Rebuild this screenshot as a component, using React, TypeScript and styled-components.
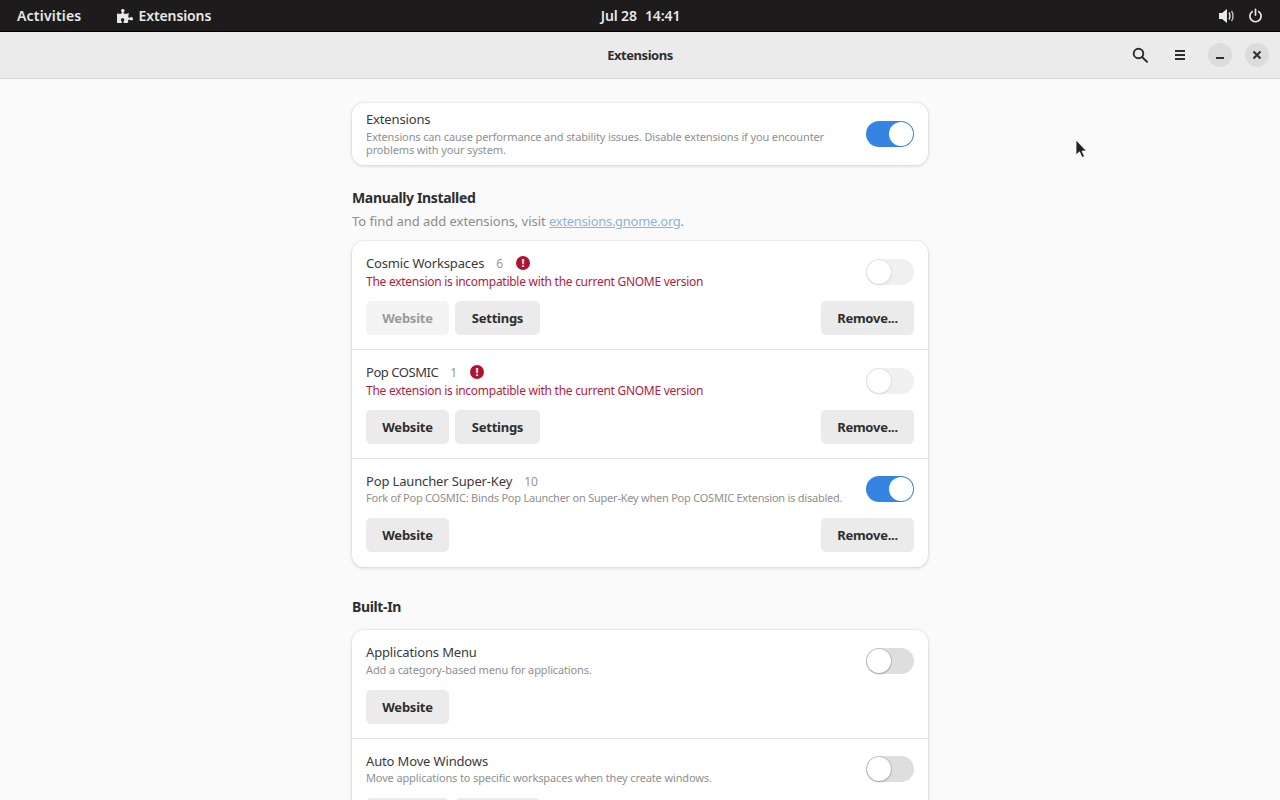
import React from 'react';
import styled, { createGlobalStyle } from 'styled-components';
import { FaPuzzlePiece } from 'react-icons/fa';

const GlobalStyle = createGlobalStyle`
  html, body {
    margin: 0;
    padding: 0;
    height: 100%;
    overflow: hidden;
    background: #fafafa;
  }
  body {
    font-family: "Noto Sans", "Open Sans", sans-serif;
    color: #2e2e2e;
  }
`;

type Ext = {
  name: string;
  version?: string;
  error?: boolean;
  desc?: string;
  on?: boolean;
  websiteDisabled?: boolean;
  settings?: boolean;
  remove?: boolean;
  nameSpacing?: number;
  descSpacing?: number;
};

const manual: Ext[] = [
  { name: 'Cosmic Workspaces', version: '6', error: true, websiteDisabled: true, settings: true, remove: true },
  { name: 'Pop COSMIC', version: '1', error: true, settings: true, remove: true, nameSpacing: -0.45 },
  {
    name: 'Pop Launcher Super-Key',
    version: '10',
    on: true,
    remove: true,
    desc: 'Fork of Pop COSMIC: Binds Pop Launcher on Super-Key when Pop COSMIC Extension is disabled.',
    descSpacing: -0.23,
  },
];

const builtIn: Ext[] = [
  { name: 'Applications Menu', desc: 'Add a category-based menu for applications.' },
  { name: 'Auto Move Windows', desc: 'Move applications to specific workspaces when they create windows.', settings: true },
];

const ExtensionRow = ({ ext }: { ext: Ext }) => (
  <Row>
    <RowTop>
      <RowText>
        <NameLine>
          <Name $spacing={ext.nameSpacing}>{ext.name}</Name>
          {ext.version && <Version>{ext.version}</Version>}
          {ext.error && <ErrorBadge>!</ErrorBadge>}
        </NameLine>
        {ext.error ? (
          <ErrorText>The extension is incompatible with the current GNOME version</ErrorText>
        ) : (
          <Desc $spacing={ext.descSpacing}>{ext.desc}</Desc>
        )}
      </RowText>
      <Toggle $on={!!ext.on} $faded={!!ext.error} />
    </RowTop>
    <Actions>
      <Button $width={83} $disabled={ext.websiteDisabled}>Website</Button>
      {ext.settings && <Button $width={85}>Settings</Button>}
      {ext.remove && <RemoveButton $width={93}>Remove...</RemoveButton>}
    </Actions>
  </Row>
);

export default function App() {
  return (
    <>
      <GlobalStyle />
      <Screen>
        <TopBar>
          <TopLeft>
            <ActivitiesLabel>Activities</ActivitiesLabel>
            <TopApp>
              <FaPuzzlePiece size={16} />
              <AppLabel>Extensions</AppLabel>
            </TopApp>
          </TopLeft>
          <Clock>
            <span>Jul 28</span>
            <span>14:41</span>
          </Clock>
          <TopRight>
            <svg width="17" height="16" viewBox="0 0 17 16" fill="#e8e8e8">
              <path d="M1 5h3l5-4v14l-5-4H1z" />
              <path d="M11 4.500c1.200 1.500 1.200 5.500 0 7" fill="none" stroke="#e8e8e8" strokeWidth="1.500" />
              <path d="M13.500 3c2 2.500 2 7.500 0 10" fill="none" stroke="#bdbdbd" strokeWidth="1.500" />
            </svg>
            <svg width="15" height="15" viewBox="0 0 16 16" fill="none" stroke="#e8e8e8" strokeWidth="1.800" strokeLinecap="round">
              <path d="M8 1.500v6" />
              <path d="M4.500 3.800a6 6 0 1 0 7 0" />
            </svg>
          </TopRight>
        </TopBar>

        <Header>
          <HeaderTitle>Extensions</HeaderTitle>
          <HeaderTools>
            <IconSlot>
              <svg width="16" height="16" viewBox="0 0 16 16" fill="none" stroke="#2e2e2e" strokeWidth="1.900">
                <circle cx="6.500" cy="6.500" r="4.800" />
                <path d="M10 10l5 4.800" strokeLinecap="round" />
              </svg>
            </IconSlot>
            <IconSlot>
              <svg width="12" height="12" viewBox="0 0 12 12" fill="#2e2e2e">
                <rect x="1" y="1" width="10" height="2" />
                <rect x="1" y="5" width="10" height="2" />
                <rect x="1" y="9" width="10" height="2" />
              </svg>
            </IconSlot>
            <WindowButton>
              <svg width="10" height="10" viewBox="0 0 10 10" fill="#2e2e2e">
                <rect x="1" y="7" width="8" height="2" />
              </svg>
            </WindowButton>
            <CloseButton>
              <svg width="10" height="10" viewBox="0 0 10 10" fill="none" stroke="#2e2e2e" strokeWidth="2">
                <path d="M1.500 1.500l7 7M8.500 1.500l-7 7" />
              </svg>
            </CloseButton>
          </HeaderTools>
        </Header>

        <Content>
          <Column>
            <MainCard>
              <MainText>
                <Name>Extensions</Name>
                <Desc>
                  Extensions can cause performance and stability issues. Disable extensions if you encounter
                  problems with your system.
                </Desc>
              </MainText>
              <Toggle $on />
            </MainCard>

            <SectionTitle>Manually Installed</SectionTitle>
            <SectionHint>
              To find and add extensions, visit <HintLink>extensions.gnome.org</HintLink>.
            </SectionHint>
            <Card>
              {manual.map((ext) => (
                <ExtensionRow key={ext.name} ext={ext} />
              ))}
            </Card>

            <BuiltInTitle>Built-In</BuiltInTitle>
            <Card>
              {builtIn.map((ext) => (
                <ExtensionRow key={ext.name} ext={ext} />
              ))}
            </Card>
          </Column>
        </Content>

        <Cursor>
          <svg width="12" height="20" viewBox="0 0 12 20">
            <path d="M1 1v15l3.500-3.200L7 18.500l2.500-1-2.400-5.500H11.500z" fill="#222" stroke="#fff" strokeWidth="0.800" />
          </svg>
        </Cursor>
      </Screen>
    </>
  );
}

const Screen = styled.div`
  position: relative;
  width: 1280px;
  height: 800px;
  overflow: hidden;
  background: #fafafa;
  display: flex;
  flex-direction: column;
`;

const TopBar = styled.div`
  flex: 0 0 31px;
  background: #1d1b1b;
  border-bottom: 1px solid #000;
  display: grid;
  grid-template-columns: 1fr auto 1fr;
  align-items: center;
  padding: 0 17px;
  color: #e8e8e8;
`;

const TopLeft = styled.div`
  display: flex;
  align-items: center;
  gap: 36px;
`;

const TopLabel = styled.span`
  font-size: 14px;
  font-weight: 600;
`;

const ActivitiesLabel = styled(TopLabel)`
  letter-spacing: 0.2px;
`;

const AppLabel = styled(TopLabel)`
  letter-spacing: -0.1px;
`;

const TopApp = styled.div`
  display: flex;
  align-items: center;
  gap: 5px;
`;

const Clock = styled.div`
  display: flex;
  gap: 8px;
  font-size: 14px;
  font-weight: 600;
  letter-spacing: -0.1px;
  padding-left: 1px;
`;

const TopRight = styled.div`
  display: flex;
  align-items: center;
  justify-content: flex-end;
  gap: 13px;
`;

const Header = styled.div`
  flex: 0 0 46px;
  background: #ebebeb;
  border-bottom: 1px solid #d6d6d6;
  display: flex;
  align-items: center;
  justify-content: center;
  position: relative;
`;

const HeaderTitle = styled.div`
  font-size: 13px;
  font-weight: 700;
  letter-spacing: -0.45px;
`;

const HeaderTools = styled.div`
  position: absolute;
  right: 11px;
  top: 11px;
  display: flex;
  align-items: center;
  gap: 16px;
`;

const IconSlot = styled.div`
  width: 24px;
  height: 24px;
  display: flex;
  align-items: center;
  justify-content: center;
`;

const WindowButton = styled(IconSlot)`
  border-radius: 50%;
  background: #dcdcdc;
`;

const CloseButton = styled(WindowButton)`
  margin-left: -3px;
`;

const Content = styled.div`
  flex: 1;
  overflow: hidden;
`;

const Column = styled.div`
  width: 576px;
  margin: 0 auto;
  padding-top: 24px;
`;

const Card = styled.div`
  background: #fff;
  border-radius: 12px;
  box-shadow: 0 0 0 1px rgba(0, 0, 0, 0.03), 0 1px 3px 1px rgba(0, 0, 0, 0.09);
  overflow: hidden;
`;

const MainCard = styled(Card)`
  height: 62px;
  box-sizing: border-box;
  padding: 0 14px;
  display: flex;
  align-items: center;
  justify-content: space-between;
`;

const SectionTitle = styled.div`
  margin-top: 23px;
  font-size: 14px;
  font-weight: 700;
  line-height: 20px;
  letter-spacing: -0.35px;
`;

const BuiltInTitle = styled(SectionTitle)`
  margin-top: 30px;
  margin-bottom: 13px;
`;

const SectionHint = styled.div`
  margin-top: 3px;
  margin-bottom: 10px;
  font-size: 13px;
  line-height: 20px;
  letter-spacing: -0.04px;
  color: #8b8b8b;
`;

const HintLink = styled.span`
  color: #8fb3dc;
  text-decoration: underline;
  letter-spacing: -0.28px;
`;

const Desc = styled.div<{ $spacing?: number }>`
  font-size: 11px;
  line-height: 13px;
  letter-spacing: ${(p) => p.$spacing ?? -0.13}px;
  color: #8f8f8f;
`;

const RowTop = styled.div`
  display: flex;
  justify-content: space-between;
  align-items: center;
  min-height: 36px;
`;

const Row = styled.div`
  padding: 12px 14px 14px;
  border-bottom: 1px solid #e4e4e4;
  &:first-child ${RowTop} {
    min-height: 37px;
  }
  &:first-child ${Desc} {
    margin-top: 1px;
  }
  &:last-child {
    border-bottom: none;
    padding-bottom: 15px;
  }
`;

const RowText = styled.div`
  display: flex;
  flex-direction: column;
  width: 490px;
  align-self: flex-start;
`;

const MainText = styled(RowText)`
  align-self: center;
  gap: 1px;
  margin-bottom: 4px;
`;

const NameLine = styled.div`
  display: flex;
  align-items: center;
  height: 20px;
`;

const Name = styled.div<{ $spacing?: number }>`
  font-size: 13px;
  line-height: 20px;
  letter-spacing: ${(p) => p.$spacing ?? -0.15}px;
  color: #3a3a3a;
`;

const Version = styled.span`
  margin-left: 12px;
  font-size: 12px;
  color: #969696;
`;

const ErrorBadge = styled.span`
  margin-left: 13px;
  width: 14px;
  height: 14px;
  border-radius: 50%;
  background: #b0132f;
  color: #fff;
  font-size: 11px;
  font-weight: 700;
  line-height: 14px;
  text-align: center;
`;

const ErrorText = styled.div`
  font-size: 12px;
  line-height: 17px;
  letter-spacing: -0.27px;
  color: #b3213f;
`;

const Toggle = styled.div<{ $on?: boolean; $faded?: boolean }>`
  position: relative;
  flex: none;
  width: 48px;
  height: 26px;
  border-radius: 13px;
  background: ${(p) => (p.$on ? '#3584e4' : '#dedede')};
  opacity: ${(p) => (p.$faded ? 0.45 : 1)};
  &::after {
    content: '';
    position: absolute;
    top: 1px;
    left: ${(p) => (p.$on ? '23px' : '1px')};
    width: 24px;
    height: 24px;
    border-radius: 50%;
    background: #fff;
    box-shadow: ${(p) => (p.$on ? 'none' : '0 0 0 1px rgba(0, 0, 0, 0.12), 0 1px 2px rgba(0, 0, 0, 0.2)')};
  }
`;

const Actions = styled.div`
  display: flex;
  gap: 6px;
  margin-top: 11px;
`;

const Button = styled.div<{ $width: number; $disabled?: boolean }>`
  width: ${(p) => p.$width}px;
  height: 34px;
  border-radius: 5px;
  background: ${(p) => (p.$disabled ? '#f4f4f4' : '#ebebeb')};
  color: ${(p) => (p.$disabled ? '#9a9a9a' : '#2e2e2e')};
  font-size: 13px;
  font-weight: 700;
  letter-spacing: -0.25px;
  display: flex;
  align-items: center;
  justify-content: center;
`;

const RemoveButton = styled(Button)`
  margin-left: auto;
`;

const Cursor = styled.div`
  position: absolute;
  left: 1075px;
  top: 139px;
  line-height: 0;
`;
